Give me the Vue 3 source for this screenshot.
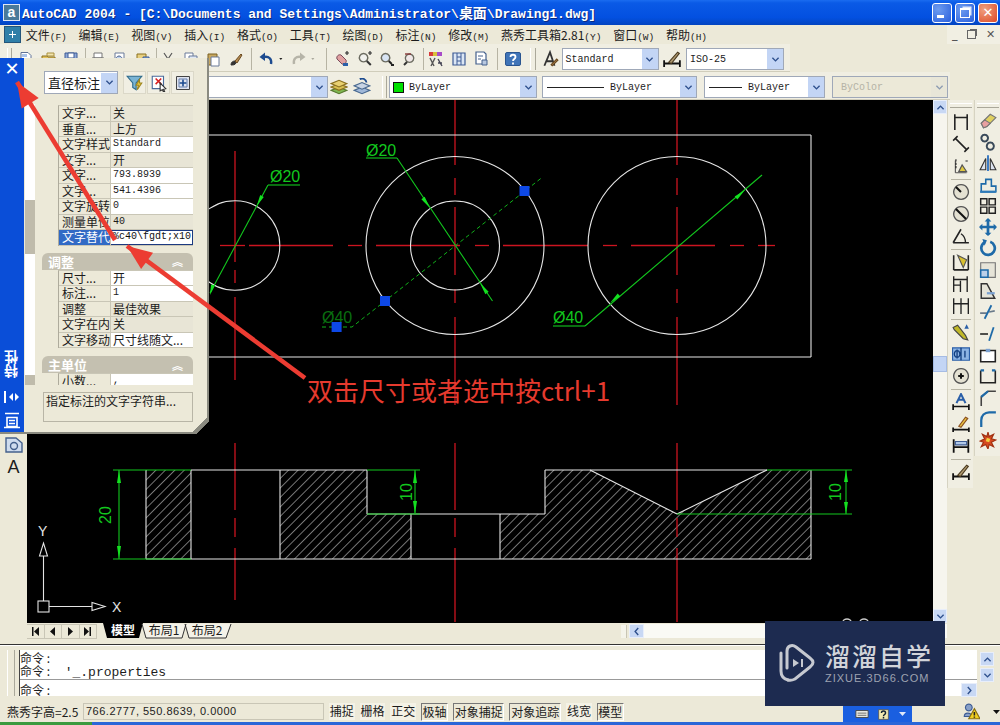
<script setup>
import { h } from 'vue'

// d, fill, stroke, stroke width (16x16 box)
const icons = {
  chev: [['M3.5 5.5l4.5 4.5 4.5-4.5', 'none', '#2d4f8c', 2]],
  up: [['M3.5 10.5l4.5-4.5 4.5 4.5', 'none', '#2d4f8c', 2]],
  right: [['M5.5 3l4.5 5-4.5 5', 'none', '#2d4f8c', 2]],
  left: [['M10.5 3l-4.5 5 4.5 5', 'none', '#2d4f8c', 2]],
  new: [['M3 1.5h7l3 3v10H3z', '#fff', '#5e7196'], ['M4 3h5v3H4z', '#a9c2e8', 'none']],
  open: [['M1 5h5l1 1h7v8H1z', '#e2c25c', '#8a7020'], ['M6 2h7v3H6z', '#f3e5ad', '#a89040']],
  save: [['M2 2h12v12H2z', '#8fa9d8', '#3c5b94'], ['M5 2h6v5H5z', '#fff', '#3c5b94']],
  print: [['M4 2h8v5H4z', '#fff', '#777'], ['M2 7h12v5H2z', '#cfcfcf', '#666']],
  preview: [['M3 2h9v12H3z', '#fff', '#6b7a99'], ['M7 5a3 3 0 1 0 .1 0z', '#bcd0ee', '#4a5f88']],
  plot: [['M2 3h9v8H2z', '#e8d080', '#8a7020'], ['M8 6h6v7H8z', '#7fa7df', '#3c5b94']],
  cut: [['M4 2l6 9M12 2l-6 9', 'none', '#555', 1.2], ['M5 13a2 2 0 1 0 .1 0zM11 13a2 2 0 1 0 .1 0z', 'none', '#555', 1.2]],
  copy: [['M2 2h8v9H2z', '#fff', '#6b7a99'], ['M6 5h8v9H6z', '#dfe8f6', '#6b7a99']],
  paste: [['M3 3h9v11H3z', '#c8a860', '#7a6020'], ['M6 6h8v9H6z', '#fff', '#6b7a99']],
  brush: [['M3 14c0-3 2-4 4-4l1 2c-1 2-3 2-5 2z', '#333', '#333'], ['M7 10l6-7 1 1-5 8z', '#b58a50', '#6a4a20']],
  undo: [['M13 13c1-5-2-8-7-7', 'none', '#1d4b8f', 2.4], ['M7 1.5L1.5 6 7 10z', '#1d4b8f', 'none']],
  redo: [['M3 13c-1-5 2-8 7-7', 'none', '#b6b4a8', 2.4], ['M9 1.5L14.5 6 9 10z', '#b6b4a8', 'none']],
  caret: [['M2 6.5h5L4.5 9.5z', '#222', 'none']],
  caretg: [['M2 6.5h5L4.5 9.5z', '#aaa89c', 'none']],
  pan: [['M3 8c-1-3 2-5 4-4l5 5c1 2-1 5-4 4z', '#e0a0a0', '#7a4a5a'], ['M11 2h4M13 0v4', 'none', '#333', 1.2], ['M9 12h5v3H9z', '#2a5fa8', 'none']],
  zoomr: [['M6.5 2.5a4.2 4.2 0 1 0 .1 0z', '#f2f2ee', '#6b6b60', 1.4], ['M9.8 10l4 4', 'none', '#333', 2], ['M11 2h4M13 0v4', 'none', '#333', 1.2]],
  zoomw: [['M6.5 2.5a4.2 4.2 0 1 0 .1 0z', '#d8e4f4', '#6b6b60', 1.4], ['M9.8 10l3 3', 'none', '#222', 2], ['M12 13h3v2h-3z', '#222', 'none']],
  zoomp: [['M7.5 3a4.2 4.2 0 1 0 .1 0z', '#f0e8e8', '#6b6b60', 1.4], ['M5 11l-3 3', 'none', '#333', 2], ['M3 3h6', 'none', '#8a3a3a', 1.4]],
  props: [['M1 1h4v4H1z', '#d83a3a', 'none'], ['M5 1h4v4H5z', '#d8c03a', 'none'], ['M9 1h5v4H9z', '#a84ac8', 'none'], ['M2 7l4 8M7 7l-4 8', 'none', '#555', 1.4], ['M10 8l4 7M10 12h4', 'none', '#445', 1.4]],
  design: [['M2 2h12v12H2z', '#dbe6f4', '#3c5b94', 1.2], ['M6 2v12M10 2v12M6 6h4M6 10h4', 'none', '#3c5b94']],
  sheet: [['M3 1h8l2 2v10H3z', '#fff', '#44608c', 1.2], ['M5 5h5M5 8h3M9 9h5v5H9z', '#b8c8e0', '#44608c']],
  help: [['M2 1.5h12a1.5 1.5 0 0 1 1.5 1.5v10a1.5 1.5 0 0 1-1.5 1.5H2A1.5 1.5 0 0 1 .5 13V3A1.5 1.5 0 0 1 2 1.5z', '#3f74b8', '#2a5590'], ['M5.5 6c0-3 5-3 5 0 0 2-2.500 2-2.500 4M8 11.500v2', 'none', '#fff', 1.8]],
  tstyle: [['M3 14L8 2l4 12M5 10h6', 'none', '#333', 1.6], ['M9 13l5-5 1 1-5 5z', '#c09060', '#6a4a20']],
  dstyle: [['M1 12h14M1 9v6M15 9v6', 'none', '#111', 1.6], ['M5 11l8-9 1.500 1-7 9z', '#b09a70', '#4a3a20']],
  layers: [['M1 11l7-3 7 3-7 3z', '#80b850', '#5a7a30'], ['M1 8l7-3 7 3-7 3z', '#d8c050', '#8a7020'], ['M1 5l7-3 7 3-7 3z', '#e8d070', '#8a7020']],
  layerp: [['M1 11l7-3 7 3-7 3z', '#a0b8d8', '#4a6a90'], ['M1 7l7-3 7 3-7 3z', '#c8d4e4', '#4a6a90'], ['M6 1a4 4 0 0 1 6 3', 'none', '#1d4b8f', 1.6]],
  qsel: [['M1 2h13L9 8v6l-3-2V8z', '#7ab4d4', '#2e6a8a'], ['M12 5l-3 5h2l-1 4 4-6h-2z', '#e8c840', '#a08820']],
  selobj: [['M2 2h10v11H2z', '#fff', '#4a6a9a'], ['M5 4l5 5M10 4L5 9', 'none', '#d82020', 1.4], ['M9 8l5 5-2 .5 1 2-1 .5-1-2-2 1z', '#fff', '#333']],
  pick: [['M1.500 1.500h13v13h-13z', '#e0e4ee', '#444'], ['M8 4.500v7M4.500 8h7', 'none', '#1d4b8f', 1.6], ['M4 4h8v8H4z', 'none', '#6680b0']],
  dimlin: [['M2.500 1v14M13.500 1v14M2.500 4h11', 'none', '#222', 1.4]],
  dimali: [['M1 5l4-4M11 15l4-4M3 3l10 10', 'none', '#222', 1.4]],
  dimord: [['M3 14V3M3 14h10', 'none', '#555', 1], ['M3 3h1M3 6h1M3 9h1M13 3v1', 'none', '#222', 2], ['M6 13l3-6 4 6z', '#e0c840', '#555']],
  dimrad: [['M8 1.500a6.500 6.500 0 1 0 .1 0z', '#e4e1d2', '#555', 1.2], ['M8 8L3.500 3.500', 'none', '#111', 1.8]],
  dimdia: [['M8 1.500a6.500 6.500 0 1 0 .1 0z', '#e4e1d2', '#555', 1.2], ['M3.500 3.500l9 9', 'none', '#111', 1.8]],
  dimang: [['M1 14h14M1 14L8 2', 'none', '#222', 1.4], ['M8 6c3 2 4 4 4 8', 'none', '#222', 1.2]],
  qdim: [['M1.500 2v13M14.500 2v13M1.500 15h13', 'none', '#222', 1.4], ['M5 2l8 4-3 7z', '#d8c030', '#555', 1]],
  dimbas: [['M1.500 1v14M13.500 1v14M7.500 5v10M1.500 4h12M1.500 9h6', 'none', '#222', 1.2]],
  dimcon: [['M1.500 1v14M8 1v14M14.500 1v14M1.500 6h13', 'none', '#222', 1.2]],
  leader: [['M1 4l4-2 7 9 2 4-4-1-8-8z', '#c0b828', '#444'], ['M13 1l2 4h-4z', '#2a5fa8', 'none']],
  tol: [['M.5 2.500h15v11H.5z', '#8cb4e4', '#2a5fa8'], ['M8 2.500v11M4.500 5a2.500 3 0 1 0 .1 0zM4.500 4v8M11.500 5v6', 'none', '#123f80', 1.2]],
  center: [['M8 1.500a6.500 6.500 0 1 0 .1 0z', '#e4e1d2', '#555', 1.2], ['M8 5.500v5M5.500 8h5', 'none', '#111', 1.8]],
  dimedit: [['M4 9L8 1l4 8M5.500 6h5', 'none', '#2a5fa8', 1.8], ['M1 12h14M1 10v5M15 10v5', 'none', '#111', 1.5]],
  dimted: [['M1 13h14M1 11v4M15 11v4', 'none', '#111', 1.5], ['M6 10l6-8 2 1-6 8z', '#e8c040', '#8a5020']],
  dimupd: [['M1.500 2v12M14.500 2v12M1.500 9h13', 'none', '#111', 1.6], ['M3 4h10v3H3z', '#b0c8e8', '#3c5b94']],
  erase: [['M2 10l8-8 5 3-8 8-3 1z', '#e0d060', '#777'], ['M2 10l3-3 5 3-3 3-3 1z', '#e8a0a0', '#777']],
  mcopy: [['M5 1.500a3 3 0 1 0 .1 0zM10 8.500a3.200 3.200 0 1 0 .1 0z', 'none', '#3a4a5a', 1.8]],
  mirror: [['M1 14l5-10v10zM15 14l-5-10v10z', '#dde4f0', '#333'], ['M8 1v14', 'none', '#2a6fc0', 1.6]],
  offset: [['M2 14V7h4V3h5v6h4v5z', 'none', '#1e6aa8', 1.4], ['M1 14h14', 'none', '#2e7ab8', 2]],
  array: [['M1.500 1.500h5.500v5.500H1.500zM9 1.500h5.500v5.500H9zM1.500 9h5.500v5.500H1.500zM9 9h5.500v5.500H9z', 'none', '#222', 1.3]],
  move: [['M8 1v14M1 8h14', 'none', '#1e6aa8', 2.4], ['M8 0l3 3H5zM8 16l3-3H5zM0 8l3-3v6zM16 8l-3-3v6z', '#1e6aa8', 'none']],
  rotate: [['M10 2.500a6 6 0 1 1-5 .5', 'none', '#1e6aa8', 2.4], ['M3 0l4 1-2 5z', '#1e6aa8', 'none']],
  scale: [['M1.500 1.500h13v13h-13z', '#e6e4d8', '#777'], ['M1.500 8h6.500v6.500H1.500z', '#bcd0e8', '#1e6aa8', 1.4]],
  stretch: [['M2 1.500h5l7 13H2z', '#e6e4d8', '#333', 1.3], ['M7 10h7', 'none', '#7aa0d0', 2]],
  trim: [['M1 9h6M9 8l5-1', 'none', '#6a7a8a', 1.4], ['M11 2L5 14', 'none', '#1e6aa8', 1.6]],
  extend: [['M1 8h7', 'none', '#222', 1.4], ['M13 2l-4 12', 'none', '#1e6aa8', 1.6]],
  brk: [['M1.500 4h13v10h-13z', '#fff', '#222', 1.4], ['M6 4h4', 'none', '#7aa0d0', 3]],
  brk2: [['M1.500 3v11h13V3', 'none', '#222', 1.4], ['M1.500 3h3M11.500 3h3', 'none', '#1e6aa8', 2]],
  chamfer: [['M2 15V7l6-5h7', 'none', '#444', 1.4], ['M2 7l6-5', 'none', '#1e6aa8', 2]],
  fillet: [['M2 15V9c0-4 3-7 7-7h6', 'none', '#1e6aa8', 2]],
  explode: [['M8 1l1 4 4-2-2 4 4 1-4 2 2 4-4-2-1 4-2-4-4 2 2-4-3-1 4-2-2-4 4 2z', '#d84a20', '#a03010'], ['M7 6l3 1-1 3-3-1z', '#f0d040', 'none']],
  kb: [['M1 4h14v8H1z', '#e8e8e0', '#444'], ['M3 7h10M3 9.500h10', 'none', '#666']],
  q: [['M2 2h12v12H2z', '#f0e8b0', '#555'], ['M5.500 6c0-3 5-3 5 0 0 2-2.500 2-2.500 4M8 11v2', 'none', '#123', 1.8]],
  warn: [['M6 1a3 3 0 1 0 .1 0zM2 12c0-4 6-4 7 0z', '#88a0c8', '#3c5b94'], ['M11 5l5 9H6z', '#f2d020', '#8a7010'], ['M11 8v3M11 12v1', 'none', '#222', 1.4]],
}

function Ic(props) {
  const s = props.s || 16
  return h('svg', { width: s, height: s, viewBox: '0 0 16 16', class: 'ic' },
    icons[props.name].map((p) => h('path', { d: p[0], fill: p[1], stroke: p[2], 'stroke-width': p[3] || 1 })))
}
Ic.props = ['name', 's']

const menus = [
  ['文件', 'F'], ['编辑', 'E'], ['视图', 'V'], ['插入', 'I'], ['格式', 'O'], ['工具', 'T'],
  ['绘图', 'D'], ['标注', 'N'], ['修改', 'M'], ['燕秀工具箱2.81', 'Y'], ['窗口', 'W'], ['帮助', 'H'],
]

// sep = gap width, narrow = small dropdown arrow
const tools = [
  { i: 'new' }, { i: 'open' }, { i: 'save' }, { sep: 4 },
  { i: 'print' }, { i: 'preview' }, { i: 'plot' }, { sep: 3 },
  { i: 'cut' }, { i: 'copy' }, { i: 'paste' }, { i: 'brush' }, { sep: 8 },
  { i: 'undo' }, { i: 'caret', narrow: true }, { i: 'redo' }, { i: 'caretg', narrow: true }, { sep: 11 },
  { i: 'pan' }, { i: 'zoomr' }, { i: 'zoomw' }, { i: 'zoomp' }, { sep: 4 },
  { i: 'props' }, { i: 'design' }, { i: 'sheet' }, { sep: 9 },
  { i: 'help' },
]

const dimTools = [
  ['dimlin', 'dimali', 'dimord'], ['dimrad', 'dimdia', 'dimang'], ['qdim', 'dimbas', 'dimcon'],
  ['leader', 'tol', 'center'], ['dimedit', 'dimted', 'dimupd'], ['dstyle'],
]
const modTools = ['erase', 'mcopy', 'mirror', 'offset', 'array', 'move', 'rotate', 'scale', 'stretch', 'trim', 'extend', 'brk', 'brk2', 'chamfer', 'fillet', 'explode']

const firstRows = [
  ['文字...', '关', 0], ['垂直...', '上方', 0], ['文字样式', 'Standard', 1], ['文字...', '开', 0],
  ['文字...', '793.8939', 1], ['文字...', '541.4396', 1], ['文字旋转', '0', 1], ['测量单位', '40', 0],
]
const fitRows = [
  ['尺寸...', '开', 1], ['标注...', '1', 1], ['调整', '最佳效果', 0], ['文字在内', '关', 0], ['文字移动', '尺寸线随文...', 1],
]
const isCjk = (s) => /[^\x00-\x7f]/.test(s)

// Drawing, in page coordinates (viewBox starts at the canvas corner)
const redLines = [
  [220, 245.5, 245, 245.5], [249, 245.5, 333, 245.5], [348, 245.5, 362, 245.5], [376, 245.5, 460, 245.5],
  [475, 245.5, 489, 245.5], [503, 245.5, 588, 245.5], [603, 245.5, 617, 245.5], [631, 245.5, 715, 245.5],
  [730, 245.5, 744, 245.5], [758, 245.5, 775, 245.5],
  [235, 151, 235, 262], [235, 270, 235, 283], [235, 297, 235, 380],
  [455, 100, 455, 165], [455, 178, 455, 195], [455, 207, 455, 275], [455, 289, 455, 303], [455, 317, 455, 405],
  [677, 100, 677, 165], [677, 178, 677, 195], [677, 207, 677, 275], [677, 289, 677, 303], [677, 317, 677, 405],
  [235, 443, 235, 510], [235, 518, 235, 537], [235, 548, 235, 600],
  [455, 443, 455, 510], [455, 518, 455, 537], [455, 548, 455, 622],
  [677, 443, 677, 510], [677, 518, 677, 537], [677, 548, 677, 622],
]
const whiteCircles = [[235, 245.5, 44.8], [455, 245.5, 44.5], [455, 245.5, 89], [677, 245.5, 89]]
const whiteLines = [
  [100, 135, 811, 135], [100, 357, 811, 357], [811, 135, 811, 357],
  [191, 470, 367, 470], [545, 470, 767, 470], [146, 559, 811, 559], [367, 514, 545, 514],
  [146, 470, 146, 559], [191, 470, 191, 559], [280, 470, 280, 559], [367, 470, 367, 514],
  [411, 514, 411, 559], [500, 514, 500, 559], [545, 470, 545, 514], [811, 470, 811, 559],
  [590, 470, 677, 514], [677, 514, 767, 470],
]
const greenLines = [
  [268, 185, 300, 185], [268, 185, 210, 293], [366, 158, 397, 158], [397, 158, 492.5, 301],
  [553, 326, 585, 326], [585, 326, 762, 175],
  [113, 470, 191, 470], [113, 559, 191, 559], [119, 470, 119, 559],
  [367, 470, 420, 470], [367, 514, 420, 514], [415, 470, 415, 514],
  [767, 470, 852, 470], [677, 514, 852, 514], [846, 470, 846, 514],
]
const arrowList = [
  [256.7, 206, 262, 196], [210, 295, 213, 285], [430, 208, 423, 198], [480, 283, 487, 293],
  [610, 303, 619, 295], [745, 190, 736, 198],
  [119, 470, 119, 483], [119, 559, 119, 546], [415, 470, 415, 483], [415, 514, 415, 501],
  [846, 470, 846, 482], [846, 514, 846, 502],
]
function arrowPts(a) {
  const [tx, ty, bx, by] = a
  const len = Math.hypot(bx - tx, by - ty)
  const nx = (-(by - ty) / len) * 2
  const ny = ((bx - tx) / len) * 2
  return `${tx},${ty} ${bx + nx},${by + ny} ${bx - nx},${by - ny}`
}
const grips = [[336.6, 327], [385, 301], [524.5, 191]]
const notes = [
  { tip: [17, 82], tail: [115, 240] },
  { tip: [127, 246], tail: [305, 378] },
]
// red callout arrow: shaft plus head
function noteHead(n) {
  const [tx, ty] = n.tip
  const [bx, by] = n.tail
  const len = Math.hypot(bx - tx, by - ty)
  const ux = (bx - tx) / len
  const uy = (by - ty) / len
  const mx = tx + ux * 25
  const my = ty + uy * 25
  return `${tx},${ty} ${mx - uy * 10},${my + ux * 10} ${mx + uy * 10},${my - ux * 10}`
}
</script>

<template>
  <div class="app">
    <div class="titlebar">
      <span class="app-icon">a</span>
      <span class="title">AutoCAD 2004 - [C:\Documents and Settings\Administrator\<span class="title-cjk">桌面</span>\Drawing1.dwg]</span>
      <span class="win-btns">
        <span class="win-btn"><i class="min"></i></span>
        <span class="win-btn"><i class="max"></i></span>
        <span class="win-btn close">✕</span>
      </span>
    </div>

    <div class="menubar">
      <span class="doc-icon"><i></i></span>
      <span v-for="m in menus" :key="m[0]" class="menu-item">{{ m[0] }}<small>({{ m[1] }})</small></span>
      <span class="doc-btns"><b>_</b><i class="restore"></i><b>✕</b></span>
    </div>

    <div class="toolbars">
      <div class="tb-row first">
        <span class="grip"></span>
        <template v-for="(t, idx) in tools" :key="idx">
          <span v-if="t.sep" class="tb-sep" :style="{ width: t.sep + 'px' }"></span>
          <span v-else class="tool" :class="{ narrow: t.narrow }"><Ic :name="t.i" /></span>
        </template>
        <span class="grip second"></span>
        <span class="tool style-tool"><Ic name="tstyle" :s="18" /></span>
        <div class="combo style-combo"><span class="mono">Standard</span><span class="drop"><Ic name="chev" :s="11" /></span></div>
        <span class="tool dim-tool"><Ic name="dstyle" :s="18" /></span>
        <div class="combo dim-combo"><span class="mono">ISO-25</span><span class="drop"><Ic name="chev" :s="11" /></span></div>
      </div>
      <div class="tb-row second-row">
        <div class="combo layer-combo"><span class="drop"><Ic name="chev" :s="11" /></span></div>
        <span class="tool layer-tool"><Ic name="layers" :s="18" /></span>
        <span class="tool"><Ic name="layerp" :s="18" /></span>
        <span class="grip third"></span>
        <div class="combo color-combo"><i class="swatch"></i><span class="mono">ByLayer</span><span class="drop"><Ic name="chev" :s="11" /></span></div>
        <div class="combo ltype-combo"><i class="ltype"></i><span class="mono">ByLayer</span><span class="drop"><Ic name="chev" :s="11" /></span></div>
        <div class="combo lweight-combo"><i class="ltype short"></i><span class="mono">ByLayer</span><span class="drop"><Ic name="chev" :s="11" /></span></div>
        <div class="combo plot-combo"><span class="mono">ByColor</span><span class="drop off"><Ic name="chev" :s="11" /></span></div>
      </div>
    </div>

    <div class="workspace">
      <div class="left-dock">
        <span class="left-tool"><svg width="20" height="18" viewBox="0 0 20 18"><path d="M2 2h10l6 5v9H2z" fill="#cfdcee" stroke="#44608c" stroke-width="1.4" /><circle cx="10" cy="10" r="3.500" fill="none" stroke="#44608c" stroke-width="1.4" /></svg></span>
        <span class="left-a">A</span>
      </div>

      <div class="center">
        <div class="canvas-row">
          <svg class="canvas" width="906" height="523" viewBox="27 100 906 523">
            <defs>
              <pattern id="hatch" patternUnits="userSpaceOnUse" width="6.700" height="6.700" patternTransform="rotate(45)">
                <line x1="0" y1="0" x2="0" y2="6.700" stroke="#d2d2d2" stroke-width="1.100" />
              </pattern>
            </defs>
            <rect x="27" y="100" width="906" height="523" fill="#000" />

            <path d="M146 470H191V559H146Z M280 470H367V514H411V559H280Z M500 559V514H545V470H590L677 514L767 470H811V559Z" fill="url(#hatch)" />

            <line v-for="(l, idx) in redLines" :key="'r' + idx" :x1="l[0]" :y1="l[1]" :x2="l[2]" :y2="l[3]" stroke="#cc1420" stroke-width="1.300" />
            <circle v-for="(c, idx) in whiteCircles" :key="'c' + idx" :cx="c[0]" :cy="c[1]" :r="c[2]" fill="none" stroke="#e6e6e6" stroke-width="1.100" />
            <line v-for="(l, idx) in whiteLines" :key="'w' + idx" :x1="l[0]" :y1="l[1]" :x2="l[2]" :y2="l[3]" stroke="#e6e6e6" stroke-width="1.100" />
            <line v-for="(l, idx) in greenLines" :key="'g' + idx" :x1="l[0]" :y1="l[1]" :x2="l[2]" :y2="l[3]" stroke="#12c81e" stroke-width="1.100" />
            <polygon v-for="(a, idx) in arrowList" :key="'a' + idx" :points="arrowPts(a)" fill="#14e020" />

            <!-- selected dimension -->
            <path d="M322 327H352L542.700 177" fill="none" stroke="#10b01a" stroke-width="1" stroke-dasharray="4 3" />
            <text x="322" y="323" class="dim dim-sel">Ø40</text>
            <rect v-for="g in grips" :key="g[0]" :x="g[0] - 5" :y="g[1] - 5" width="10" height="10" fill="#0d48e6" />

            <text x="270" y="182" class="dim">Ø20</text>
            <text x="366" y="156" class="dim">Ø20</text>
            <text x="553" y="323" class="dim">Ø40</text>
            <text x="111" y="515" class="dim mid" transform="rotate(-90 111 515)">20</text>
            <text x="412" y="492" class="dim mid" transform="rotate(-90 412 492)">10</text>
            <text x="841" y="492" class="dim mid" transform="rotate(-90 841 492)">10</text>

            <!-- UCS icon -->
            <g fill="none" stroke="#e4e4e4" stroke-width="1.100">
              <rect x="38" y="601" width="11" height="11" />
              <path d="M43.500 601V556M39.500 556H47.500L43.500 543Z M49 606.500H92M92 602.500V610.500L105 606.500Z" />
            </g>
            <text x="38" y="536" class="ucs">Y</text>
            <text x="112" y="612" class="ucs">X</text>
            <path d="M843 622a4 3 0 0 1 8 0M860 622a4 3 0 0 1 8 0" fill="none" stroke="#c8c8c8" stroke-width="1.500" />
          </svg>
          <div class="vscroll">
            <span class="sb-btn"><Ic name="up" :s="11" /></span>
            <span class="sb-thumb"></span>
            <span class="sb-btn"><Ic name="chev" :s="11" /></span>
          </div>
        </div>

        <div class="tabs-row">
          <div class="tab-nav">
            <span><svg width="9" height="9" viewBox="0 0 9 9"><path d="M1 0h1.500v9H1zM8 0v9L3 4.500z" fill="#111" /></svg></span>
            <span><svg width="9" height="9" viewBox="0 0 9 9"><path d="M7 0v9L2 4.500z" fill="#111" /></svg></span>
            <span><svg width="9" height="9" viewBox="0 0 9 9"><path d="M2 0v9l5-4.500z" fill="#111" /></svg></span>
            <span><svg width="9" height="9" viewBox="0 0 9 9"><path d="M1 0v9l5-4.500zM6.500 0H8v9H6.500z" fill="#111" /></svg></span>
          </div>
          <svg class="tabs" width="130" height="16" viewBox="0 0 130 16">
            <path d="M2 0L6 15H38L42 0Z" fill="#000" />
            <path d="M41 1L45 15H81L85 1M84 1L88 15H125L130 1" fill="#f4f2e8" stroke="#333" />
            <text x="22" y="12" class="tab-t on">模型</text>
            <text x="63" y="12" class="tab-t">布局1</text>
            <text x="106" y="12" class="tab-t">布局2</text>
          </svg>
          <div class="hscroll">
            <span class="hs-grip"></span>
            <span class="sb-btn wide"><Ic name="left" :s="11" /></span>
            <span class="hs-track"></span>
          </div>
        </div>
      </div>

      <div class="right-dock">
        <div class="dock-col dims">
          <span class="dock-grip"></span>
          <template v-for="(g, gi) in dimTools" :key="gi">
            <span v-if="gi" class="dock-sep"></span>
            <span v-for="n in g" :key="n" class="dock-tool"><Ic :name="n" :s="18" /></span>
          </template>
        </div>
        <div class="dock-col mods">
          <span class="dock-grip short"></span>
          <span v-for="n in modTools" :key="n" class="dock-tool mod"><Ic :name="n" :s="18" /></span>
        </div>
      </div>
    </div>

    <div class="cmd-area">
      <div class="cmd-rule"></div>
      <div class="cmd-body">
        <span class="cmd-grip"></span>
        <div class="cmd-text">
          <div class="cmd-log">
            <div>命令 :</div>
            <div>命令 : <span class="cmd-echo">'_.properties</span></div>
          </div>
          <div class="cmd-line">命令 :</div>
        </div>
        <div class="cmd-side">
          <span class="sb-btn"><Ic name="up" :s="11" /></span>
          <span class="sb-btn"><Ic name="chev" :s="11" /></span>
          <span class="sb-btn cmd-right"><Ic name="right" :s="11" /></span>
        </div>
      </div>
    </div>

    <div class="statusbar">
      <span class="st-label">燕秀字高=2.5</span>
      <span class="st-coords">766.2777, 550.8639, 0.0000</span>
      <span class="st-btn">捕捉</span>
      <span class="st-btn">栅格</span>
      <span class="st-btn">正交</span>
      <span class="st-btn on">极轴</span>
      <span class="st-btn on wide">对象捕捉</span>
      <span class="st-btn on wide">对象追踪</span>
      <span class="st-btn">线宽</span>
      <span class="st-btn on">模型</span>
      <span class="tray">
        <Ic name="kb" :s="14" />
        <Ic name="q" :s="13" />
        <svg width="7" height="4" viewBox="0 0 7 4"><path d="M0 0h7L3.500 4z" fill="#dfe8fa" /></svg>
      </span>
      <span class="st-warn"><Ic name="warn" :s="18" /></span>
      <svg class="st-caret" width="7" height="4" viewBox="0 0 7 4"><path d="M0 0h7L3.500 4z" fill="#111" /></svg>
    </div>
    <div class="taskbar"><span class="start"></span></div>

    <!-- floating properties palette -->
    <div class="palette">
      <div class="pal-strip">
        <span class="pal-close">✕</span>
        <span class="pal-name">特性</span>
        <svg class="pal-auto" width="18" height="14" viewBox="0 0 18 14"><path d="M1 1h2v12H1zM6 7l4-4v8zM12 3l4 4-4 4z" fill="#fff" /></svg>
        <svg class="pal-menu" width="18" height="17" viewBox="0 0 18 17"><path d="M2 1.500h14M4 5.500h10v9H4zM6 8.500h6M6 11.500h6M1 15.500h16" fill="none" stroke="#fff" stroke-width="1.600" /></svg>
      </div>
      <div class="pal-body">
        <div class="pal-top">
          <div class="combo pal-combo"><span>直径标注</span><span class="drop"><Ic name="chev" :s="11" /></span></div>
          <span class="pal-tool"><Ic name="qsel" :s="18" /></span>
          <span class="pal-tool"><Ic name="selobj" :s="18" /></span>
          <span class="pal-tool"><Ic name="pick" :s="16" /></span>
        </div>
        <div class="pal-mid">
          <div class="pal-scroll">
            <span class="ps-up"></span>
            <span class="ps-thumb"></span>
            <span class="ps-down"></span>
          </div>
          <div class="pal-props">
            <div class="prop-group">
              <div v-for="(r, idx) in firstRows" :key="idx" class="prop-row">
                <span class="prop-name">{{ r[0] }}</span>
                <span class="prop-val" :class="{ white: r[2], cjk: isCjk(r[1]) }">{{ r[1] }}</span>
              </div>
              <div class="prop-row active">
                <span class="prop-name">文字替代</span>
                <span class="prop-val white">%c40\fgdt;x10</span>
              </div>
            </div>
            <div class="section"><span>调整</span><b>︽</b></div>
            <div class="prop-group">
              <div v-for="(r, idx) in fitRows" :key="idx" class="prop-row">
                <span class="prop-name">{{ r[0] }}</span>
                <span class="prop-val" :class="{ white: r[2], cjk: isCjk(r[1]) }">{{ r[1] }}</span>
              </div>
            </div>
            <div class="section"><span>主单位</span><b>︽</b></div>
            <div class="prop-group">
              <div class="prop-row">
                <span class="prop-name">小数...</span>
                <span class="prop-val white">,</span>
              </div>
            </div>
          </div>
        </div>
        <div class="pal-desc">指定标注的文字字符串...</div>
      </div>
      <span class="pal-corner"></span>
    </div>

    <!-- red callouts drawn over the screenshot -->
    <svg class="notes" width="1000" height="725" viewBox="0 0 1000 725">
      <g v-for="(n, idx) in notes" :key="idx">
        <line :x1="n.tip[0]" :y1="n.tip[1]" :x2="n.tail[0]" :y2="n.tail[1]" stroke="#ec3c32" stroke-width="4.500" />
        <polygon :points="noteHead(n)" fill="#ec3c32" />
      </g>
      <text x="307" y="401" class="note-text">双击尺寸或者选中按ctrl+1</text>
    </svg>

    <div class="watermark">
      <svg width="36" height="38" viewBox="0 0 36 38">
        <path d="M2 9V27C2 32 5 35 9 36" fill="none" stroke="#c6c9d0" stroke-width="3" stroke-linecap="round" />
        <path d="M9 36C12 37 14 36 16 35L31 23C35 20 35 17 31 14L17 3C13 0 8 2 8 7V24" fill="none" stroke="#c6c9d0" stroke-width="3" stroke-linecap="round" />
        <path d="M14 15l6 4-6 4zM22 15h2v8h-2z" fill="#c6c9d0" />
      </svg>
      <div class="wm-text">
        <div class="wm-cn">溜溜自学</div>
        <div class="wm-en">ZIXUE.3D66.COM</div>
      </div>
    </div>
  </div>
</template>

<style scoped>
.app {
  position: relative;
  width: 1000px;
  height: 725px;
  overflow: hidden;
  display: flex;
  flex-direction: column;
  background: #ece9d8;
  color: #1c1c1c;
  font-family: "Noto Sans CJK SC", "Liberation Sans", sans-serif;
  font-size: 12px;
}
.ic {
  display: block;
}
.mono {
  font-family: "Liberation Mono", "Noto Sans CJK SC", monospace;
  font-size: 10px;
}

/* title bar */
.titlebar {
  height: 25px;
  flex: none;
  display: flex;
  align-items: center;
  padding-left: 3px;
  background: linear-gradient(#1a6cf0 0, #0a5ae6 12%, #0350e0 70%, #0244c0 100%);
}
.app-icon {
  width: 15px;
  height: 15px;
  margin-right: 2px;
  border: 1px solid #dfe6f2;
  background: #4a7a9a;
  color: #fff;
  font: bold 14px/14px "Liberation Sans", sans-serif;
  text-align: center;
}
.title {
  font: bold 13px "Liberation Mono", "Noto Sans CJK SC", monospace;
  color: #fff;
  white-space: nowrap;
  text-shadow: 1px 1px 0 #0a2a80;
  position: relative;
  top: -1px;
}
.title-cjk {
  font-size: 14px;
}
.win-btns {
  margin-left: auto;
  display: flex;
  gap: 3px;
  padding-right: 2px;
}
.win-btn {
  width: 20px;
  height: 20px;
  box-sizing: border-box;
  border: 1px solid #fff;
  border-radius: 3px;
  background: radial-gradient(circle at 30% 30%, #6d9cf0, #2a5fdc);
  display: flex;
  align-items: center;
  justify-content: center;
  position: relative;
}
.win-btn .min {
  position: absolute;
  left: 4px;
  bottom: 4px;
  width: 7px;
  height: 3px;
  background: #fff;
}
.win-btn .max {
  width: 8px;
  height: 7px;
  border: 1.500px solid #fff;
  border-top-width: 2.500px;
  box-shadow: 2px -2px 0 -0.500px #dfe8fa;
}
.win-btn.close {
  background: radial-gradient(circle at 30% 30%, #f0a080, #dc4a26);
  color: #fff;
  font: bold 13px "DejaVu Sans", sans-serif;
}

/* menu */
.menubar {
  height: 19px;
  flex: none;
  display: flex;
  align-items: center;
  gap: 11.700px;
  padding-left: 4px;
}
.doc-icon {
  width: 15px;
  height: 15px;
  margin-right: -7px;
  background: #2f7fa8;
  border: 1px solid #24557a;
  display: flex;
  align-items: center;
  justify-content: center;
}
.doc-icon i {
  width: 7px;
  height: 7px;
  background: linear-gradient(#fff, #fff) center/100% 1px no-repeat, linear-gradient(#fff, #fff) center/1px 100% no-repeat;
}
.menu-item {
  white-space: nowrap;
}
.menu-item small {
  font: 9.500px "Liberation Mono", monospace;
}
.doc-btns {
  margin-left: auto;
  width: 53px;
  height: 19px;
  display: flex;
  align-items: center;
  justify-content: space-around;
  background: #f1efe3;
  color: #555;
  font: bold 11px "DejaVu Sans", sans-serif;
}
.doc-btns .restore {
  width: 7px;
  height: 7px;
  border: 1px solid #666;
  box-shadow: 2px -2px 0 -1px #666;
}

/* toolbars */
.toolbars {
  height: 56px;
  flex: none;
}
.tb-row {
  height: 28px;
  box-sizing: border-box;
  display: flex;
  align-items: center;
  border-bottom: 1px solid #d0cdbb;
  background: #f0eee2;
  padding-top: 3px;
}
.first {
  width: 790px;
  padding-left: 7px;
}
.second-row {
  width: 950px;
  padding-left: 40px;
}
.grip {
  width: 3px;
  height: 22px;
  margin-right: 3px;
  border-left: 1px solid #fff;
  border-right: 1px solid #aaa89a;
}
.grip.second {
  margin: 0 3px 0 6px;
  width: 4px;
}
.grip.third {
  margin: 0 2px 0 9px;
  width: 3px;
}
.tb-sep {
  flex: none;
  position: relative;
  height: 22px;
}
.tb-sep::after {
  content: "";
  position: absolute;
  left: 50%;
  top: 0;
  bottom: 0;
  border-left: 1px solid #b7b4a4;
}
.tool {
  width: 22.500px;
  height: 22px;
  flex: none;
  display: flex;
  align-items: center;
  justify-content: center;
}
.tool.narrow {
  width: 10px;
}
.combo {
  height: 22px;
  box-sizing: border-box;
  flex: none;
  display: flex;
  align-items: center;
  background: #fff;
  border: 1px solid #9fa8b8;
  padding-left: 3px;
}
.drop {
  margin-left: auto;
  width: 16px;
  height: 20px;
  display: flex;
  align-items: center;
  justify-content: center;
  background: #c3d5f5;
}
.drop.off {
  background: #e6e4d8;
  opacity: 0.5;
}
.style-combo {
  width: 97px;
}
.dim-tool {
  margin-left: 2px;
  margin-right: 3px;
}
.dim-combo {
  width: 98px;
}
.layer-combo {
  width: 288px;
}
.color-combo {
  width: 148px;
  margin-right: 5px;
}
.swatch {
  width: 9px;
  height: 9px;
  margin-right: 5px;
  background: #00e000;
  border: 1px solid #111;
}
.ltype-combo {
  width: 155px;
  margin-right: 7px;
}
.ltype {
  width: 57px;
  height: 1px;
  margin: 0 6px 0 1px;
  background: #222;
}
.ltype.short {
  width: 33px;
}
.lweight-combo {
  width: 121px;
  margin-right: 7px;
}
.plot-combo {
  width: 116px;
  background: #ece9d8;
  color: #b5b3a6;
  padding-left: 8px;
}

/* main area */
.workspace {
  height: 539px;
  flex: none;
  display: flex;
}
.left-dock {
  width: 27px;
  flex: none;
  display: flex;
  flex-direction: column;
  align-items: center;
  padding-top: 334px;
  box-sizing: border-box;
}
.left-tool {
  height: 21px;
  display: flex;
  align-items: center;
}
.left-a {
  font: 18px/24px "Liberation Sans", sans-serif;
}
.center {
  width: 920px;
  flex: none;
  display: flex;
  flex-direction: column;
}
.canvas-row {
  height: 523px;
  display: flex;
}
.canvas {
  display: block;
  flex: none;
}
.dim {
  font: 16px "Liberation Sans", sans-serif;
  fill: #12c81e;
}
.dim-sel {
  opacity: 0.55;
}
.mid {
  text-anchor: middle;
}
.ucs {
  font: 14px "Liberation Sans", sans-serif;
  fill: #e4e4e4;
}
.vscroll {
  width: 14px;
  display: flex;
  flex-direction: column;
  background: #f6f5ee;
}
.sb-btn {
  width: 14px;
  height: 14px;
  flex: none;
  display: flex;
  align-items: center;
  justify-content: center;
  background: #c8d8f4;
  border: 1px solid #e8eefa;
  box-sizing: border-box;
}
.sb-thumb {
  height: 14px;
  margin: auto 0 237px;
  background: #c3d5f5;
  border: 1px solid #a6bce4;
}
.tabs-row {
  height: 16px;
  display: flex;
  align-items: center;
  background: #ece9d8;
}
.tab-nav {
  width: 70px;
  display: flex;
  height: 15px;
}
.tab-nav span {
  flex: 1;
  display: flex;
  align-items: center;
  justify-content: center;
  border: 1px solid #c9c6b6;
  border-left: none;
  background: #ece9d8;
}
.tabs {
  display: block;
  margin-left: 4px;
  flex: none;
  overflow: visible;
}
.tab-t {
  font-size: 12px;
  text-anchor: middle;
  fill: #1c1c1c;
}
.tab-t.on {
  fill: #fff;
  font-weight: 700;
}
.hscroll {
  margin-left: 390px;
  flex: 1;
  display: flex;
  align-items: center;
}
.hs-grip {
  width: 5px;
  height: 13px;
  background: #f4f3ea;
  border-right: 1px solid #c8c5b5;
  margin-right: 2px;
}
.sb-btn.wide {
  width: 15px;
}
.hs-track {
  flex: 1;
  height: 14px;
  background: #fafaf5;
}
.right-dock {
  width: 53px;
  flex: none;
  display: flex;
  align-items: flex-start;
}
.dock-col {
  width: 26px;
  display: flex;
  flex-direction: column;
  align-items: center;
  background: #f0eee2;
  border-left: 1px solid #d6d3c2;
  box-sizing: border-box;
}
.dims {
  height: 388px;
}
.mods {
  height: 356px;
  margin-left: 1px;
}
.dock-grip {
  width: 22px;
  height: 3px;
  margin: 3px 0 3px;
  border-top: 1px solid #fff;
  border-bottom: 1px solid #aaa89a;
}
.dock-grip.short {
  margin-bottom: 2px;
}
.dock-tool {
  height: 22px;
  flex: none;
  display: flex;
  align-items: center;
}
.dock-tool.mod {
  height: 21.300px;
}
.dock-sep {
  width: 20px;
  height: 4px;
  flex: none;
  position: relative;
}
.dock-sep::after {
  content: "";
  position: absolute;
  left: 0;
  right: 0;
  top: 2px;
  border-top: 1px solid #b7b4a4;
}

/* command window */
.cmd-area {
  height: 59px;
  flex: none;
  box-sizing: border-box;
  padding-top: 5px;
}
.cmd-rule {
  height: 1px;
  background: #333;
  box-shadow: 0 1px 0 #fff;
}
.cmd-body {
  margin-top: 5px;
  height: 46px;
  display: flex;
  padding-left: 7px;
}
.cmd-grip {
  width: 6px;
  margin-right: 4px;
  border-left: 1px solid #fff;
  border-right: 1px solid #aaa89a;
}
.cmd-text {
  width: 958px;
  flex: none;
  display: flex;
  flex-direction: column;
  background: #fff;
  border-left: 1px solid #444;
  box-sizing: border-box;
  font-size: 12px;
  line-height: 13px;
}
.cmd-log {
  height: 30px;
  padding-top: 1px;
  box-sizing: border-box;
  border-bottom: 1px solid #999;
}
.cmd-line {
  padding-top: 3px;
}
.cmd-echo {
  font: 13px "Liberation Mono", monospace;
  margin-left: 12px;
}
.cmd-side {
  position: relative;
  width: 14px;
  margin-left: 3px;
  display: flex;
  flex-direction: column;
  gap: 2px;
  padding-top: 2px;
}
.cmd-right {
  position: absolute;
  left: -19px;
  top: 33px;
  width: 16px;
}

/* status bar */
.statusbar {
  height: 24px;
  flex: none;
  display: flex;
  align-items: center;
  box-sizing: border-box;
  padding: 3px 0 0 7px;
  gap: 5px;
}
.st-label {
  width: 71px;
  white-space: nowrap;
}
.st-coords {
  width: 243px;
  height: 17px;
  box-sizing: border-box;
  border: 1px solid #c9c6b6;
  padding-left: 2px;
  font: 11px/15px "Liberation Sans", sans-serif;
  letter-spacing: 0.500px;
}
.st-btn {
  width: 26px;
  height: 17px;
  line-height: 16px;
  text-align: center;
  white-space: nowrap;
  background: #f4f2e6;
  font-size: 12px;
}
.st-btn.on {
  border: 1px solid #777;
  border-right-color: #fff;
  border-bottom-color: #fff;
  height: 16px;
  width: 25px;
  background: #ece9d8;
}
.st-btn.wide {
  width: 50px;
}
.tray {
  margin-left: 214px;
  width: 70px;
  height: 16px;
  align-self: flex-end;
  background: #1a5fe0;
  display: flex;
  align-items: center;
  justify-content: space-around;
  padding: 0 2px 0 8px;
  box-sizing: border-box;
}
.st-warn {
  margin-left: 45px;
}
.st-caret {
  margin-left: 8px;
}
.taskbar {
  height: 3px;
  flex: none;
  background: #2a66d8;
}
.start {
  display: block;
  width: 92px;
  height: 3px;
  background: #3a9a3e;
}

/* palette */
.palette {
  position: absolute;
  left: 0;
  top: 58px;
  width: 209px;
  height: 376px;
  display: flex;
  box-sizing: border-box;
  background: #ece9d8;
  border-right: 2px solid #8a8a80;
  border-bottom: 2px solid #8a8a80;
  clip-path: polygon(0 0, 100% 0, 100% calc(100% - 13px), calc(100% - 13px) 100%, 0 100%);
}
.pal-strip {
  width: 24px;
  flex: none;
  position: relative;
  background: #0a4ed8;
  color: #fff;
}
.pal-close {
  position: absolute;
  left: 2px;
  top: 0;
  width: 20px;
  text-align: center;
  font: bold 18px/21px "DejaVu Sans", sans-serif;
}
.pal-name {
  position: absolute;
  left: 4px;
  top: 292px;
  width: 16px;
  font-size: 14px;
  line-height: 14px;
  font-weight: 700;
  writing-mode: vertical-rl;
  transform: rotate(180deg);
}
.pal-auto {
  position: absolute;
  left: 3px;
  top: 332px;
}
.pal-menu {
  position: absolute;
  left: 3px;
  top: 354px;
}
.pal-body {
  flex: 1;
  min-width: 0;
  display: flex;
  flex-direction: column;
  position: relative;
}
.pal-top {
  margin: 13px 0 0 20px;
  display: flex;
  height: 23px;
}
.pal-combo {
  width: 74px;
  height: 23px;
  margin-right: 5px;
  font-size: 13px;
}
.pal-tool {
  width: 23px;
  height: 23px;
  margin-right: 1px;
  flex: none;
  display: flex;
  align-items: center;
  justify-content: center;
  background: #f1efe3;
  border: 1px solid #dbd8c8;
  box-sizing: border-box;
}
.pal-mid {
  margin-top: 10px;
  height: 281px;
  display: flex;
  overflow: hidden;
}
.pal-scroll {
  width: 10px;
  margin-left: 1px;
  flex: none;
  background: #fff;
  display: flex;
  flex-direction: column;
}
.ps-up {
  height: 8px;
  background: #fff;
}
.ps-thumb {
  height: 54px;
  margin-top: 88px;
  background: #bfbbab;
}
.ps-down {
  height: 10px;
  margin-top: auto;
  background: #bfbbab;
}
.pal-props {
  margin-left: 7px;
  width: 151px;
  flex: none;
  padding-top: 1px;
}
.prop-group {
  margin-left: 16px;
  margin-bottom: 7px;
  border-left: 1px solid #aeab9c;
  border-top: 1px solid #c9c6b6;
}
.prop-row {
  height: 15.500px;
  box-sizing: border-box;
  display: flex;
  border-bottom: 1px solid #c9c6b6;
  line-height: 14px;
  white-space: nowrap;
}
.prop-name {
  width: 52px;
  flex: none;
  border-right: 1px solid #c9c6b6;
  padding-left: 3px;
  box-sizing: border-box;
}
.prop-val {
  flex: 1;
  min-width: 0;
  padding-left: 2px;
  font-family: "Liberation Mono", "Noto Sans CJK SC", monospace;
  font-size: 10px;
  line-height: 14px;
  background: #e8e5d6;
}
.prop-val.cjk {
  font-family: "Noto Sans CJK SC", "Liberation Sans", sans-serif;
  font-size: 12px;
}
.prop-val.white {
  background: #fff;
}
.active .prop-name {
  background: #316ac5;
  color: #fff;
}
.active .prop-val {
  border: 1px solid #1c3a80;
  border-left: none;
  color: #111;
  line-height: 12px;
}
.section {
  height: 17px;
  margin-bottom: -7px;
  padding: 0 10px 0 6px;
  display: flex;
  justify-content: space-between;
  align-items: center;
  background: #c4c0b0;
  color: #fff;
  font-weight: 700;
  font-size: 13px;
  border-radius: 6px 6px 0 0;
}
.section + .prop-group {
  position: relative;
  top: 7px;
  margin-bottom: 15px;
}
.section b {
  font-size: 11px;
}
.pal-desc {
  margin: 7px 0 0 19px;
  width: 150px;
  height: 30px;
  box-sizing: border-box;
  border: 1px solid #b8b5a6;
  padding: 1px 2px;
  line-height: 14px;
  font-size: 12px;
  white-space: nowrap;
}
.pal-corner {
  position: absolute;
  right: -2px;
  bottom: -2px;
  width: 24px;
  height: 24px;
  background: linear-gradient(to bottom right, transparent 62%, #8a8a80 62%);
  pointer-events: none;
}

/* overlays */
.notes {
  position: absolute;
  left: 0;
  top: 0;
  pointer-events: none;
}
.note-text {
  font-size: 26px;
  fill: #e63a2e;
  font-family: "Noto Sans CJK SC", "Liberation Sans", sans-serif;
}
.watermark {
  position: absolute;
  left: 765px;
  top: 621px;
  width: 180px;
  height: 85px;
  display: flex;
  align-items: center;
  box-sizing: border-box;
  padding: 0 0 2px 14px;
  gap: 10px;
  background: #1d2b50;
  color: #d2d4da;
}
.wm-cn {
  font-size: 25px;
  line-height: 28px;
  font-weight: 500;
  letter-spacing: 2px;
  white-space: nowrap;
}
.wm-en {
  font: 11px/13px "Liberation Sans", sans-serif;
  letter-spacing: 1px;
  margin-top: 3px;
  color: #9ea3b0;
  white-space: nowrap;
}
</style>
